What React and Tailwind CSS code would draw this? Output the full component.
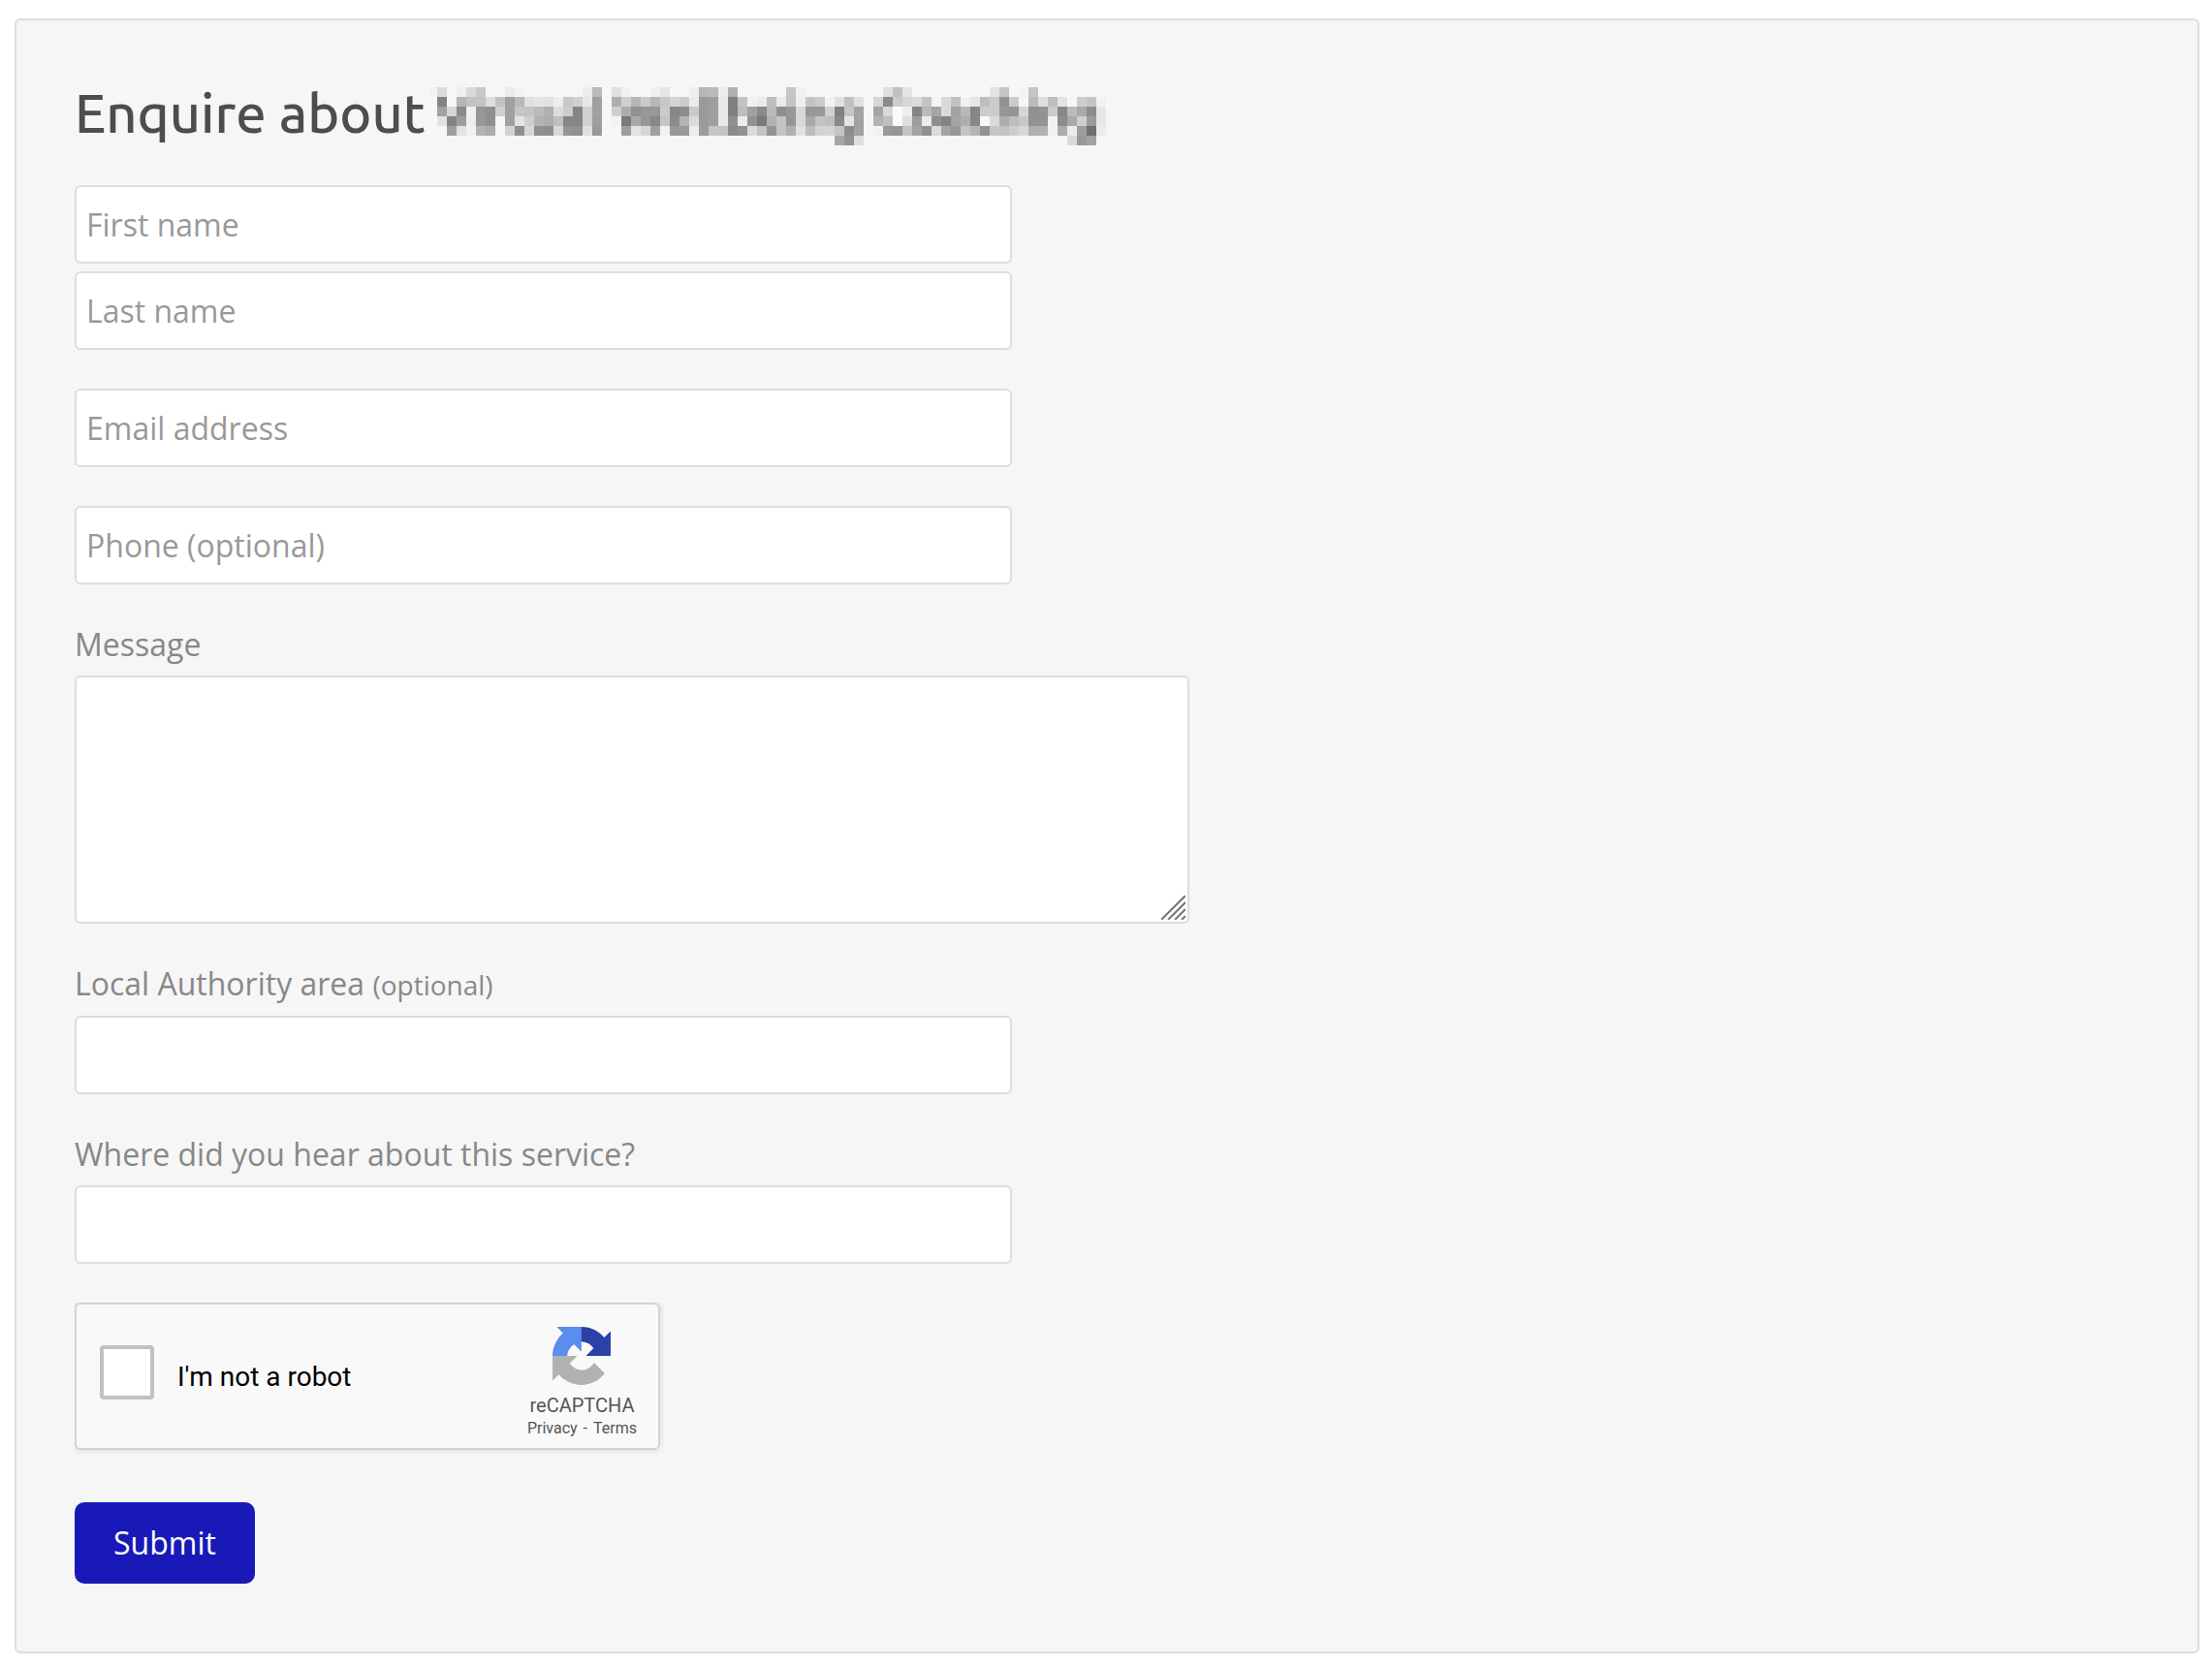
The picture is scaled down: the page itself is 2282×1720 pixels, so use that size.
import React, { useState } from 'react';

const CELL = 10;

// Grey level of each mosaic block, one byte per block, '..' is an empty block
const MOSAIC_ROWS = [
  'dc..eed9c8....ebf3............edba..dff0....efe5....efb6bbedb0..........c6f0................dfc1e4................e4c4..f3c4..............',
  '82f6b5c2c4dec2a0b9e0e5e2edc8d0e8a0..aed0b6cab7c7d5ccec9a9fe980c4f2ecbeeac4eec4ccf3e2c0e0..d68accd5dcc4f5d9c1f2e7bdcb92cc..badebfe3..ccc5f2',
  'a2d68af09790d0a0c4c4bbb0dccc84d0a0..d0ad929797cb878dca9a9fe980bda08ab98e97d89698d180c6a3..a5d8fbed85baa5dba2b886cccc9895d79193cb88baa98ce7',
  'e2849dee9790..a0e4cfb3adbf8686d09e..f37aa99688c68cb4db9a9fe990ec927ab1c495d8a9c4bd89e5a2..b3bffbdf9eec8e84a4ae87f8daaebdc89193f18da9cf9be7',
  '..9ee2f0b3ac..d390d8908ed79490e099....9ee3d7a0f1989bee9cc5c48a90dac294c3b1e1bdd2d5c58ca2..f29996c3a38fdca497c4b492c5c2cdd7afb1f2adec9d6eec',
  '..................................................................................a592dd..........................................da98a2..',
];

export default function App() {
  const [form, setForm] = useState({
    firstName: '',
    lastName: '',
    email: '',
    phone: '',
    message: '',
    area: '',
    source: '',
  });

  const handleChange = (e) => {
    setForm({ ...form, [e.target.name]: e.target.value });
  };

  const handleSubmit = (e) => {
    e.preventDefault();
  };

  return (
    <main className="bg-white pt-[19px] pr-[13px] pb-[14px] pl-[15px] font-['Open_Sans',sans-serif] text-[32px]">
      <section className="rounded-md border-2 border-[#dddddd] bg-[#f6f6f6] px-[60px] pt-[60px] pb-[70px]">
        <h1 className="flex items-center gap-1 font-[Ubuntu,'Noto_Sans',sans-serif] text-[56px] leading-[72px] font-medium text-[#4d4d4d]">
          Enquire about
          <RedactedName />
        </h1>

        <form onSubmit={handleSubmit} className="mt-[38px] flex flex-col items-start gap-10">
          <div className="flex w-full flex-col gap-2">
            <TextField name="firstName" placeholder="First name" value={form.firstName} onChange={handleChange} />
            <TextField name="lastName" placeholder="Last name" value={form.lastName} onChange={handleChange} />
          </div>
          <TextField name="email" type="email" placeholder="Email address" value={form.email} onChange={handleChange} />
          <TextField name="phone" type="tel" placeholder="Phone (optional)" value={form.phone} onChange={handleChange} />

          <div className="w-full">
            <FieldLabel htmlFor="message">Message</FieldLabel>
            <div className="relative w-full max-w-[1150px]">
              <textarea
                id="message"
                name="message"
                value={form.message}
                onChange={handleChange}
                className="block h-[256px] w-full resize-none rounded-md border-2 border-[#dddddd] bg-white px-[10px] py-2 text-[#555555] outline-none"
              />
              <ResizeGrip />
            </div>
          </div>

          <div className="w-full">
            <FieldLabel htmlFor="area">
              Local Authority area <span className="text-[28px]">(optional)</span>
            </FieldLabel>
            <TextField id="area" name="area" value={form.area} onChange={handleChange} />
          </div>

          <div className="w-full">
            <FieldLabel htmlFor="source">Where did you hear about this service?</FieldLabel>
            <TextField id="source" name="source" value={form.source} onChange={handleChange} />
          </div>

          <Captcha />

          <button
            type="submit"
            className="mt-[10px] h-[84px] rounded-[10px] bg-[#1919b7] px-10 text-white"
          >
            Submit
          </button>
        </form>
      </section>
    </main>
  );
}

function FieldLabel({ htmlFor, children }) {
  return (
    <label htmlFor={htmlFor} className="mb-[10px] block leading-[44px] text-[#888888]">
      {children}
    </label>
  );
}

function TextField({ type = 'text', placeholder, ...props }) {
  return (
    <input
      type={type}
      placeholder={placeholder}
      aria-label={placeholder}
      className="block h-[81px] w-full max-w-[967px] rounded-md border-2 border-[#dddddd] bg-white px-[10px] text-[#555555] outline-none placeholder:text-[#999999]"
      {...props}
    />
  );
}

function RedactedName() {
  return (
    <svg className="mt-[6px]" width="698" height="60" viewBox="-8 0 698 60" shapeRendering="crispEdges" aria-hidden="true">
      <rect x="-8" y="0" width="8" height="10" fill="#f2f2f2" />
      {MOSAIC_ROWS.map((row, y) =>
        row.match(/../g).map((shade, x) =>
          shade === '..' ? null : (
            <rect
              key={`${x}-${y}`}
              x={x * CELL}
              y={y * CELL}
              width={CELL}
              height={CELL}
              fill={`#${shade}${shade}${shade}`}
            />
          )
        )
      )}
    </svg>
  );
}

function ResizeGrip() {
  return (
    <svg
      className="pointer-events-none absolute right-1 bottom-1"
      width="25"
      height="25"
      viewBox="0 0 25 25"
      stroke="#737373"
      strokeWidth="2"
      aria-hidden="true"
    >
      <path d="M0 25L25 0M7 25L25 7M14 25L25 14M21 25L25 21" />
    </svg>
  );
}

function Captcha() {
  return (
    <div className="h-[156px] w-[608px] overflow-hidden font-[Roboto,sans-serif]">
      <div className="flex h-[152px] w-[604px] items-start rounded-md border-2 border-[#d3d3d3] bg-[#f9f9f9] pr-[22px] pl-6 shadow-[0_0_8px_2px_rgba(0,0,0,0.08)]">
        <input
          id="robot"
          type="checkbox"
          className="mt-[42px] size-14 appearance-none rounded-sm border-4 border-[#c1c1c1] bg-white"
        />
        <label htmlFor="robot" className="mt-[57px] ml-6 text-[28px] leading-9 text-black">
          I&apos;m not a robot
        </label>
        <div className="mt-[23px] ml-auto flex flex-col items-center text-[#555555]">
          <CaptchaLogo />
          <div className="mt-[9px] text-[20px] leading-6">reCAPTCHA</div>
          <div className="text-[16px] leading-6">
            <a href="#privacy">Privacy</a>
            <span className="px-[6px]">-</span>
            <a href="#terms">Terms</a>
          </div>
        </div>
      </div>
    </div>
  );
}

function CaptchaLogo() {
  return (
    <svg width="60" height="60" viewBox="0 0 64 64" aria-hidden="true">
      <path
        fill="#2a42a5"
        d="M64 31.955l-.033-1.37V4.687l-7.16 7.16C50.948 4.674 42.033.093 32.05.093c-10.4 0-19.622 4.96-25.458 12.64l11.736 11.86a15.55 15.55 0 0 1 4.754-5.334c2.05-1.6 4.952-2.906 8.968-2.906.485 0 .86.057 1.135.163 4.976.393 9.288 3.14 11.828 7.124l-8.307 8.307L64 31.953"
      />
      <path
        fill="#5b8def"
        d="M31.862.094l-1.37.033H4.594l7.16 7.16C4.58 13.147 0 22.06 0 32.046c0 10.4 4.96 19.622 12.64 25.458L24.5 45.768a15.55 15.55 0 0 1-5.334-4.754c-1.6-2.05-2.906-4.952-2.906-8.968 0-.485.057-.86.163-1.135.393-4.976 3.14-9.288 7.124-11.828l8.307 8.307L31.86.095"
      />
      <path
        fill="#b1b1b1"
        d="M.001 32.045l.033 1.37v25.898l7.16-7.16c5.86 7.173 14.774 11.754 24.76 11.754 10.4 0 19.622-4.96 25.458-12.64l-11.736-11.86a15.55 15.55 0 0 1-4.754 5.334c-2.05 1.6-4.952 2.906-8.968 2.906-.485 0-.86-.057-1.135-.163-4.976-.393-9.288-3.14-11.828-7.124l8.307-8.307c-10.522.04-22.4.066-27.295-.005"
      />
    </svg>
  );
}
